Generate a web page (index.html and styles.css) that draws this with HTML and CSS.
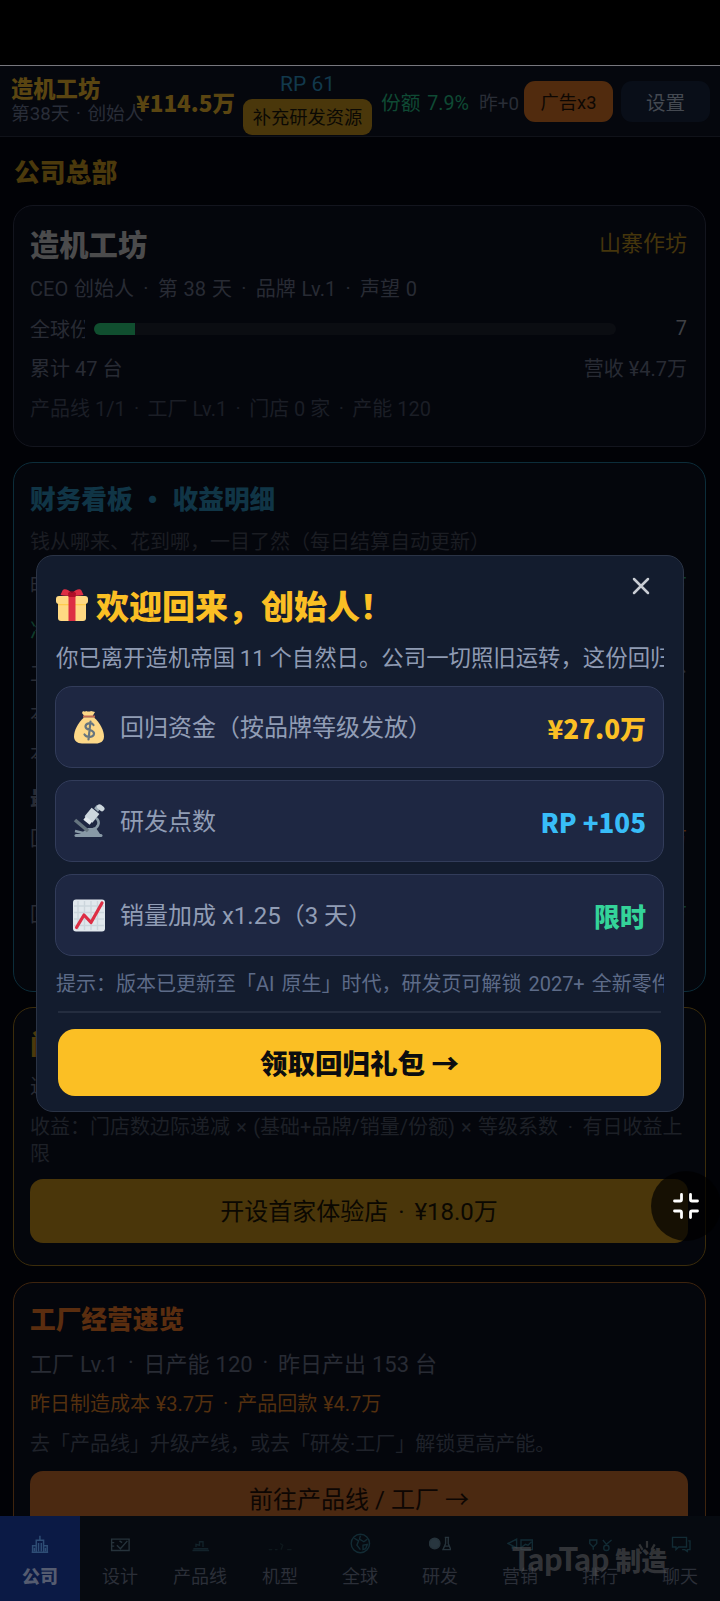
FILE: index.html
```html
<!DOCTYPE html>
<html lang="zh-CN">
<head>
<meta charset="utf-8">
<title>造机工坊</title>
<link rel="stylesheet" href="styles.css">
</head>
<body>
<div class="app">
  <div class="statusbar"></div>
  <header class="top">
    <div class="brand"><b>造机工坊</b><span>第38天<i class="d">·</i>创始人</span></div>
    <div class="cash">¥114.5万</div>
    <div class="rp"><span>RP 61</span><button class="refill">补充研发资源</button></div>
    <div class="share">份额 7.9%</div>
    <div class="delta">昨+0</div>
    <button class="tbtn ad">广告x3</button>
    <button class="tbtn set">设置</button>
  </header>

  <main>
    <h1>公司总部</h1>
    <section class="card hq">
      <div class="row head"><h2>造机工坊</h2><span class="rank">山寨作坊</span></div>
      <div class="row ceo">CEO 创始人 <i class="d">·</i> 第 38 天 <i class="d">·</i> 品牌 Lv.1 <i class="d">·</i> 声望 0</div>
      <div class="row meter"><span class="lab">全球份额</span><div class="bar"><div class="fill"></div></div><span class="seven">7</span></div>
      <div class="row"><span>累计 47 台</span><span class="right">营收 ¥4.7万</span></div>
      <div class="row faint lines">产品线 1/1 <i class="d">·</i> 工厂 Lv.1 <i class="d">·</i> 门店 0 家 <i class="d">·</i> 产能 120</div>
    </section>

    <section class="card fin">
      <h3>财务看板 <i>•</i> 收益明细</h3>
      <div class="note">钱从哪来、花到哪，一目了然（每日结算自动更新）</div>
      <div class="peek p1"><span>昨</span><span class="g">万</span></div>
      <div class="peek p2"><span class="g">净</span></div>
      <div class="peek"><span>工</span><span>台</span></div>
      <div class="peek"><span>本</span></div>
      <div class="peek"><span>本</span></div>
      <div class="peek p3"><b>最</b></div>
      <div class="peek"><span>回</span><span class="o">万</span></div>
      <div class="peek p4"><span>回</span><span class="g">万</span></div>
    </section>

    <section class="card store">
      <h3>门</h3>
      <div class="row s">进</div>
      <p>收益：门店数边际递减 × (基础+品牌/销量/份额) × 等级系数 <i class="d">·</i> 有日收益上限</p>
      <button class="wide">开设首家体验店 <i class="d">·</i> ¥18.0万</button>
    </section>

    <section class="card plant">
      <h3>工厂经营速览</h3>
      <div class="row big">工厂 Lv.1 <i class="d">·</i> 日产能 120 <i class="d">·</i> 昨日产出 153 台</div>
      <div class="row cost">昨日制造成本 ¥3.7万 <i class="d">·</i> 产品回款 ¥4.7万</div>
      <div class="row faint tip">去「产品线」升级产线，或去「研发·工厂」解锁更高产能。</div>
      <button class="wide or">前往产品线 / 工厂 <span class="arr">→</span></button>
    </section>
  </main>

  <nav>
    <a class="on"><svg viewBox="0 0 26 24"><path d="M5 21V14h4M21 21V14h-4M9 21V8h8v13M13 8V3M4 21h18M11.500 11v9M14.500 11v9M7 16v4M19 16v4"/></svg>公司</a>
    <a><svg viewBox="0 0 26 24"><path d="M3 7h20v13H3zM3 11h3M3 15h3M9 14l4 4 8-9M15 11l-3-2"/></svg>设计</a>
    <a><svg class="dim" viewBox="0 0 26 24"><path d="M4 20h19M5 18h17M8 16v-3l4 1v-4h4v6"/></svg>产品线</a>
    <a><svg class="dim2" viewBox="0 0 30 24"><path d="M2 19h4M9 19h3M15 12l3 2-2 5M23 19h5"/></svg>机型</a>
    <a><svg class="teal" viewBox="0 0 26 24"><circle cx="13" cy="12" r="10.500"/><path d="M6 6l5 3-2 5 4 5M13 3l-1 4 5 3 4-3M16 14l5-1-2 5-3 1z"/></svg>全球</a>
    <a><svg class="solid" viewBox="0 0 26 24"><circle cx="6.500" cy="12" r="6"/><path d="M18 5h5M19 5v7l-3 7h9l-3-7V5M18 15h5"/></svg>研发</a>
    <a><svg class="teal" viewBox="0 0 30 24"><path d="M1 12l10-5v10zM6 15v3M16 8h13v11H16zM17 16l4-3 3 1 4-4"/></svg>营销</a>
    <a><svg class="teal" viewBox="0 0 28 24"><path d="M2 8h8v4l-4 4-4-4zM6 16v3M17 8l4 5 6-5"/><circle cx="21" cy="17" r="3"/></svg>排行</a>
    <a><svg class="teal" viewBox="0 0 26 24"><path d="M4 5h16v11h-9l-3 3v-3H4zM22 9h2v10h-3v2l-3-2h-3"/></svg>聊天</a>
  </nav>

  <div class="mark"><span>TapTap</span> 制造<svg viewBox="0 0 20 14"><path d="M10 1v6M3 4l3 5M17 4l-3 5M1 10l4 2M19 10l-4 2"/></svg></div>

  <div class="fab"><svg viewBox="0 0 26 26"><path d="M1.500 8h5.500q1.500 0 1.500-1.500V1.500M24.500 8h-5.500q-1.500 0-1.500-1.500V1.500M1.500 18h5.500q1.500 0 1.500 1.500v5M24.500 18h-5.500q-1.500 0-1.500 1.500v5"/></svg></div>

  <div class="modal">
    <svg class="close" viewBox="0 0 18 18"><path d="M2 2l14 14M16 2L2 16"/></svg>
    <div class="mtitle">
      <svg viewBox="0 0 34 34"><path fill="#ffd983" d="M3 15h28v15a3 3 0 0 1-3 3H6a3 3 0 0 1-3-3z"/><rect x="1" y="8" width="32" height="8" rx="3" fill="#ffd983"/><path fill="#ffcc4d" d="M3 16h28v1.300H3z"/><path fill="#dd2e44" d="M17 5C13 1 9 0 7.500 2.500L5.500 7C9 8 14 8 17 7c3 1 8 1 11.500 0l-2-4.500C25 0 21 1 17 5z"/><path fill="#dd2e44" d="M13.500 7h7v26h-7z"/><path fill="#a0041e" d="M13 5q4-4 8 0l-.5 4h-7z" opacity=".75"/></svg>
      <span>欢迎回来，创始人！</span>
    </div>
    <div class="lead">你已离开造机帝国 11 个自然日。公司一切照旧运转，这份回归礼包</div>
    <div class="rewards">
      <div class="reward">
        <svg viewBox="0 0 32 34"><path fill="#fdd888" d="M10 1q2 1 3 0 3 1 5 0l4 1-3 5h-7L9 3z"/><path fill="#bf6952" d="M10 5.500h12v2.200H10z"/><path fill="#fdd888" d="M11 7.500h10c6 5 10 13 10 19 0 5-4 7-8 7H9c-5 0-8-3-8-7 0-6 4-14 10-19z"/><path fill="none" stroke="#67757f" stroke-width="2.200" stroke-linecap="round" d="M20.500 15c-2-3-8-2-8 1.500 0 4.500 8.500 2.500 8.500 7 0 4-7.500 4.500-9.500 1M17.500 11.500l-2 18"/></svg>
        <span>回归资金（按品牌等级发放）</span><b class="gold">¥27.0万</b>
      </div>
      <div class="reward">
        <svg viewBox="0 0 32 34"><path fill="none" stroke="#8899a6" stroke-width="3" stroke-linecap="round" d="M3 31.500h25"/><path fill="#8899a6" d="M7 30l8-6h8l4 6z"/><path fill="none" stroke="#8899a6" stroke-width="2.600" d="M23 14c5 4 2 10-3 11"/><path fill="none" stroke="#66757f" stroke-width="3.600" d="M2 16l13 11"/><path fill="none" stroke="#8899a6" stroke-width="2.500" d="M2 27l8 2"/><path stroke="#ccd6dd" stroke-width="10" d="M22.500 6.800L15.500 15.500"/><path stroke="#e1e8ed" stroke-width="8" d="M16 15l-2.500 3.200"/><path stroke="#99aab5" stroke-width="5" d="M23 6L26 2.500"/><path stroke="#ccd6dd" stroke-width="5" stroke-linecap="round" d="M26.500 2.800l2.500 2"/></svg>
        <span>研发点数</span><b class="blue">RP +105</b>
      </div>
      <div class="reward">
        <svg viewBox="0 0 32 34"><rect y="1.500" width="32" height="32" rx="3" fill="#e1e8ed"/><path stroke="#ccd6dd" stroke-width="1.400" d="M5 3v29M11.500 3v29M18 3v29M24.500 3v29M1 8h30M1 14.500h30M1 21h30M1 27.500h30"/><path fill="none" stroke="#dd2e44" stroke-width="3.200" stroke-linecap="round" stroke-linejoin="round" d="M3.500 29.500L11 17l7 7.500L29 5"/></svg>
        <span>销量加成 x1.25（3 天）</span><b class="green">限时</b>
      </div>
    </div>
    <div class="hint">提示：版本已更新至「AI 原生」时代，研发页可解锁 2027+ 全新零件</div>
    <hr>
    <button class="claim">领取回归礼包 <span class="arr">→</span></button>
  </div>
</div>
</body>
</html>
```
FILE: styles.css
```css
* { box-sizing: border-box; margin: 0; padding: 0; }
body { background: #000; }
.app {
  position: relative;
  width: 720px;
  height: 1601px;
  overflow: hidden;
  background: #010206;
  color: #282b34;
  font-family: Roboto, "Noto Sans CJK SC", sans-serif;
  font-size: 20px;
  white-space: nowrap;
}
button { border: 0; font: inherit; white-space: nowrap; }
b, h1, h2, h3, .cash, .mtitle, .claim { font-family: "Noto Sans CJK SC", sans-serif; font-weight: 900; }
i { font-style: normal; }
.d { display: inline-block; width: .6em; text-align: center; }
svg { fill: none; flex: none; }
.arr { font-family: "Noto Sans CJK SC", sans-serif; }

.statusbar { height: 66px; background: #000; border-bottom: 1px solid #77777d; }
.top {
  height: 71px;
  display: flex;
  align-items: center;
  padding: 0 10px 0 11px;
  background: #05070d;
  border-bottom: 1px solid #101219;
}
.brand { width: 125px; display: flex; flex-direction: column; padding-bottom: 1px; }
.brand b { font-size: 22.300px; line-height: 27px; color: #5a4511; }
.brand span { font-size: 18.700px; line-height: 26px; color: #292d38; }
.brand .d { width: 18px; }
.cash { width: 107px; font-size: 22.500px; line-height: 30px; color: #5a4511; padding-top: 2px; }
.rp { width: 129px; display: flex; flex-direction: column; align-items: center; color: #12394c; }
.rp span { font-size: 21px; line-height: 32px; padding-top: 1px; margin-bottom: -1px; }
.refill { width: 129px; height: 36px; border-radius: 9px; background: #4a370b; color: #0b0904; font-size: 18.300px; padding-bottom: 2px; margin-bottom: 1px; }
.share { width: 98px; padding-left: 9px; font-size: 19.700px; word-spacing: 2px; color: #0f4a34; }
.delta { width: 54px; padding-left: 9px; font-size: 18.800px; color: #292d36; }
.tbtn { width: 89px; height: 41px; border-radius: 11px; }
.ad { background: #512b0e; color: #0d0703; font-size: 18.300px; }
.set { background: #090e18; color: #444951; font-size: 19.500px; margin-left: 8px; }

main { padding: 0 14px 0 13px; }
h1 { height: 68px; padding: 0 1px; font-size: 25.800px; line-height: 67px; color: #4b390c; }
.card { background: #04060c; border: 1px solid #13151e; border-radius: 20px; padding: 12px 18px 0 16px; }
.row { display: flex; align-items: center; height: 40px; padding-bottom: 1px; white-space: pre; }
.hq { height: 242px; }
.head { height: 50px; justify-content: space-between; }
h2 { font-size: 29.300px; color: #4b4b4c; }
.rank { font-size: 22px; color: #45350c; padding-bottom: 4px; }
.ceo { word-spacing: .9px; }
.meter { padding-bottom: 0; }
.meter .bar { margin-top: 1px; }
.lab { width: 55px; overflow: hidden; }
.bar { width: 522px; height: 12px; margin-left: 9px; border-radius: 6px; background: #0b0d12; overflow: hidden; }
.fill { width: 41px; height: 12px; background: #104e2f; }
.seven { margin-left: auto; color: #3f4045; }
.right { margin-left: auto; }
.faint { color: #1b1e26; }
.fin { height: 530px; margin-top: 15px; border-color: #0c2d3a; }
h3 { height: 48px; font-size: 25.700px; line-height: 46px; color: #103546; white-space: pre; }
h3 i { display: inline-block; width: 28px; text-align: center; }
.note { height: 35px; line-height: 38px; font-size: 20px; color: #1b1d23; }
.peek { display: flex; justify-content: space-between; height: 40px; line-height: 40px; }
.p1 { height: 50px; padding-top: 10px; line-height: 36px; }
.p2 { height: 46px; line-height: 46px; }
.peek.p3 { height: 48px; line-height: 48px; }
.peek.p3 + .peek { height: 34px; line-height: 34px; }
.peek.p4 { height: 116px; line-height: 118px; }
.peek .g { color: #0f3d2c; }
.peek .o { color: #4b280d; }
.store { height: 259px; margin-top: 15px; border-color: #3b2c0b; }
.store h3 { color: #4b390b; }
.row.s { height: 36px; }
.store p { margin-top: 10px; font-size: 20px; word-spacing: 1.300px; line-height: 27px; color: #1d2027; white-space: normal; width: 658px; }
.wide { display: block; width: 658px; height: 64px; margin: 11px 0 0; border-radius: 13px; background: #4a360a; color: #0b0802; font-size: 24px; padding-bottom: 3px; white-space: pre; }
.plant { height: 300px; margin-top: 16px; border-color: #3e240e; }
.plant h3 { color: #5a2d0f; }
.plant .big { font-size: 22px; height: 40px; padding-bottom: 2px; word-spacing: .6px; }
.plant .cost { color: #54300f; word-spacing: .7px; }
.plant .tip { color: #1f222a; }
.plant .or { background: #4b2911; margin-top: 8px; color: #0d0603; height: 60px; padding-bottom: 7px; }

nav { position: absolute; left: 0; bottom: 0; width: 720px; height: 85px; display: flex; background: #060a10; }
nav a { width: 80px; padding-top: 17px; display: flex; flex-direction: column; align-items: center; font-size: 18px; line-height: 33px; color: #2b2f38; }
nav svg { height: 21px; margin: 0 0 6px; stroke: #26333b; stroke-width: 1.600; }
nav .on { background: #0b1a45; color: #555c70; font-weight: 900; }
nav .on svg { stroke: #2e4d75; height: 22px; margin-bottom: 5px; }
nav .dim { stroke: #12222a; }
nav .dim2 { stroke: #0e181c; }
nav .teal { stroke: #122b34; }
nav .solid circle { fill: #28363f; }

.mark {
  position: absolute;
  left: 512px;
  top: 1541px;
  color: rgba(80, 80, 83, .6);
  font: 900 26px/36px "Noto Sans CJK SC", sans-serif;
}
.mark span { font-family: Lato, sans-serif; font-weight: 900; font-size: 32px; }
.mark svg { position: absolute; left: 124px; top: -1px; width: 22px; stroke: #303234; stroke-width: 2; }

.fab {
  position: absolute;
  left: 651px;
  top: 1171px;
  width: 70px;
  height: 70px;
  border-radius: 50%;
  background: rgba(0, 0, 0, .7);
  display: flex;
  align-items: center;
  justify-content: center;
}
.fab svg { width: 26px; height: 26px; stroke: #fff; stroke-width: 2.800; stroke-linejoin: round; stroke-linecap: round; }

.modal {
  position: absolute;
  left: 36px;
  top: 555px;
  width: 648px;
  height: 557px;
  padding: 24px 19px 0 18px;
  background: #131c2e;
  border: 1px solid #2a3345;
  border-radius: 17px;
}
.close { position: absolute; right: 33px; top: 21px; width: 18px; height: 18px; stroke: #c8ccd3; stroke-width: 2.500; stroke-linecap: round; }
.mtitle { display: flex; align-items: center; height: 50px; font-size: 33px; color: #fbbf24; }
.mtitle svg { width: 34px; height: 34px; margin: 0 7px 0 0; }
.mtitle span { padding-bottom: 1px; }
.lead { height: 56px; line-height: 56px; font-size: 22.400px; word-spacing: -1px; color: #8f9bb3; overflow: hidden; padding-left: 1px; }
.rewards { display: grid; gap: 12px; }
.reward { height: 82px; display: flex; align-items: center; padding: 0 17px; background: #1e2742; border: 1px solid #323c5a; border-radius: 17px; font-size: 24px; color: #919db5; }
.reward svg { width: 32px; height: 34px; margin-right: 15px; }
.reward span { padding-bottom: 3px; }
.reward b { margin-left: auto; font-size: 26px; }
.gold { color: #fbbf24; }
.blue { color: #38bdf8; }
.green { color: #34d399; }
.hint { height: 55px; line-height: 57px; word-spacing: 2px; color: #5d6b88; overflow: hidden; padding-left: 1px; }
hr { border: 0; height: 2px; background: #242d3f; margin: 0 3px; }
.claim { display: block; width: 603px; height: 67px; margin: 16px 3px 0; padding-bottom: 2px; border-radius: 17px; background: #fbbf24; color: #0c0d10; font-size: 27.500px; }
```
